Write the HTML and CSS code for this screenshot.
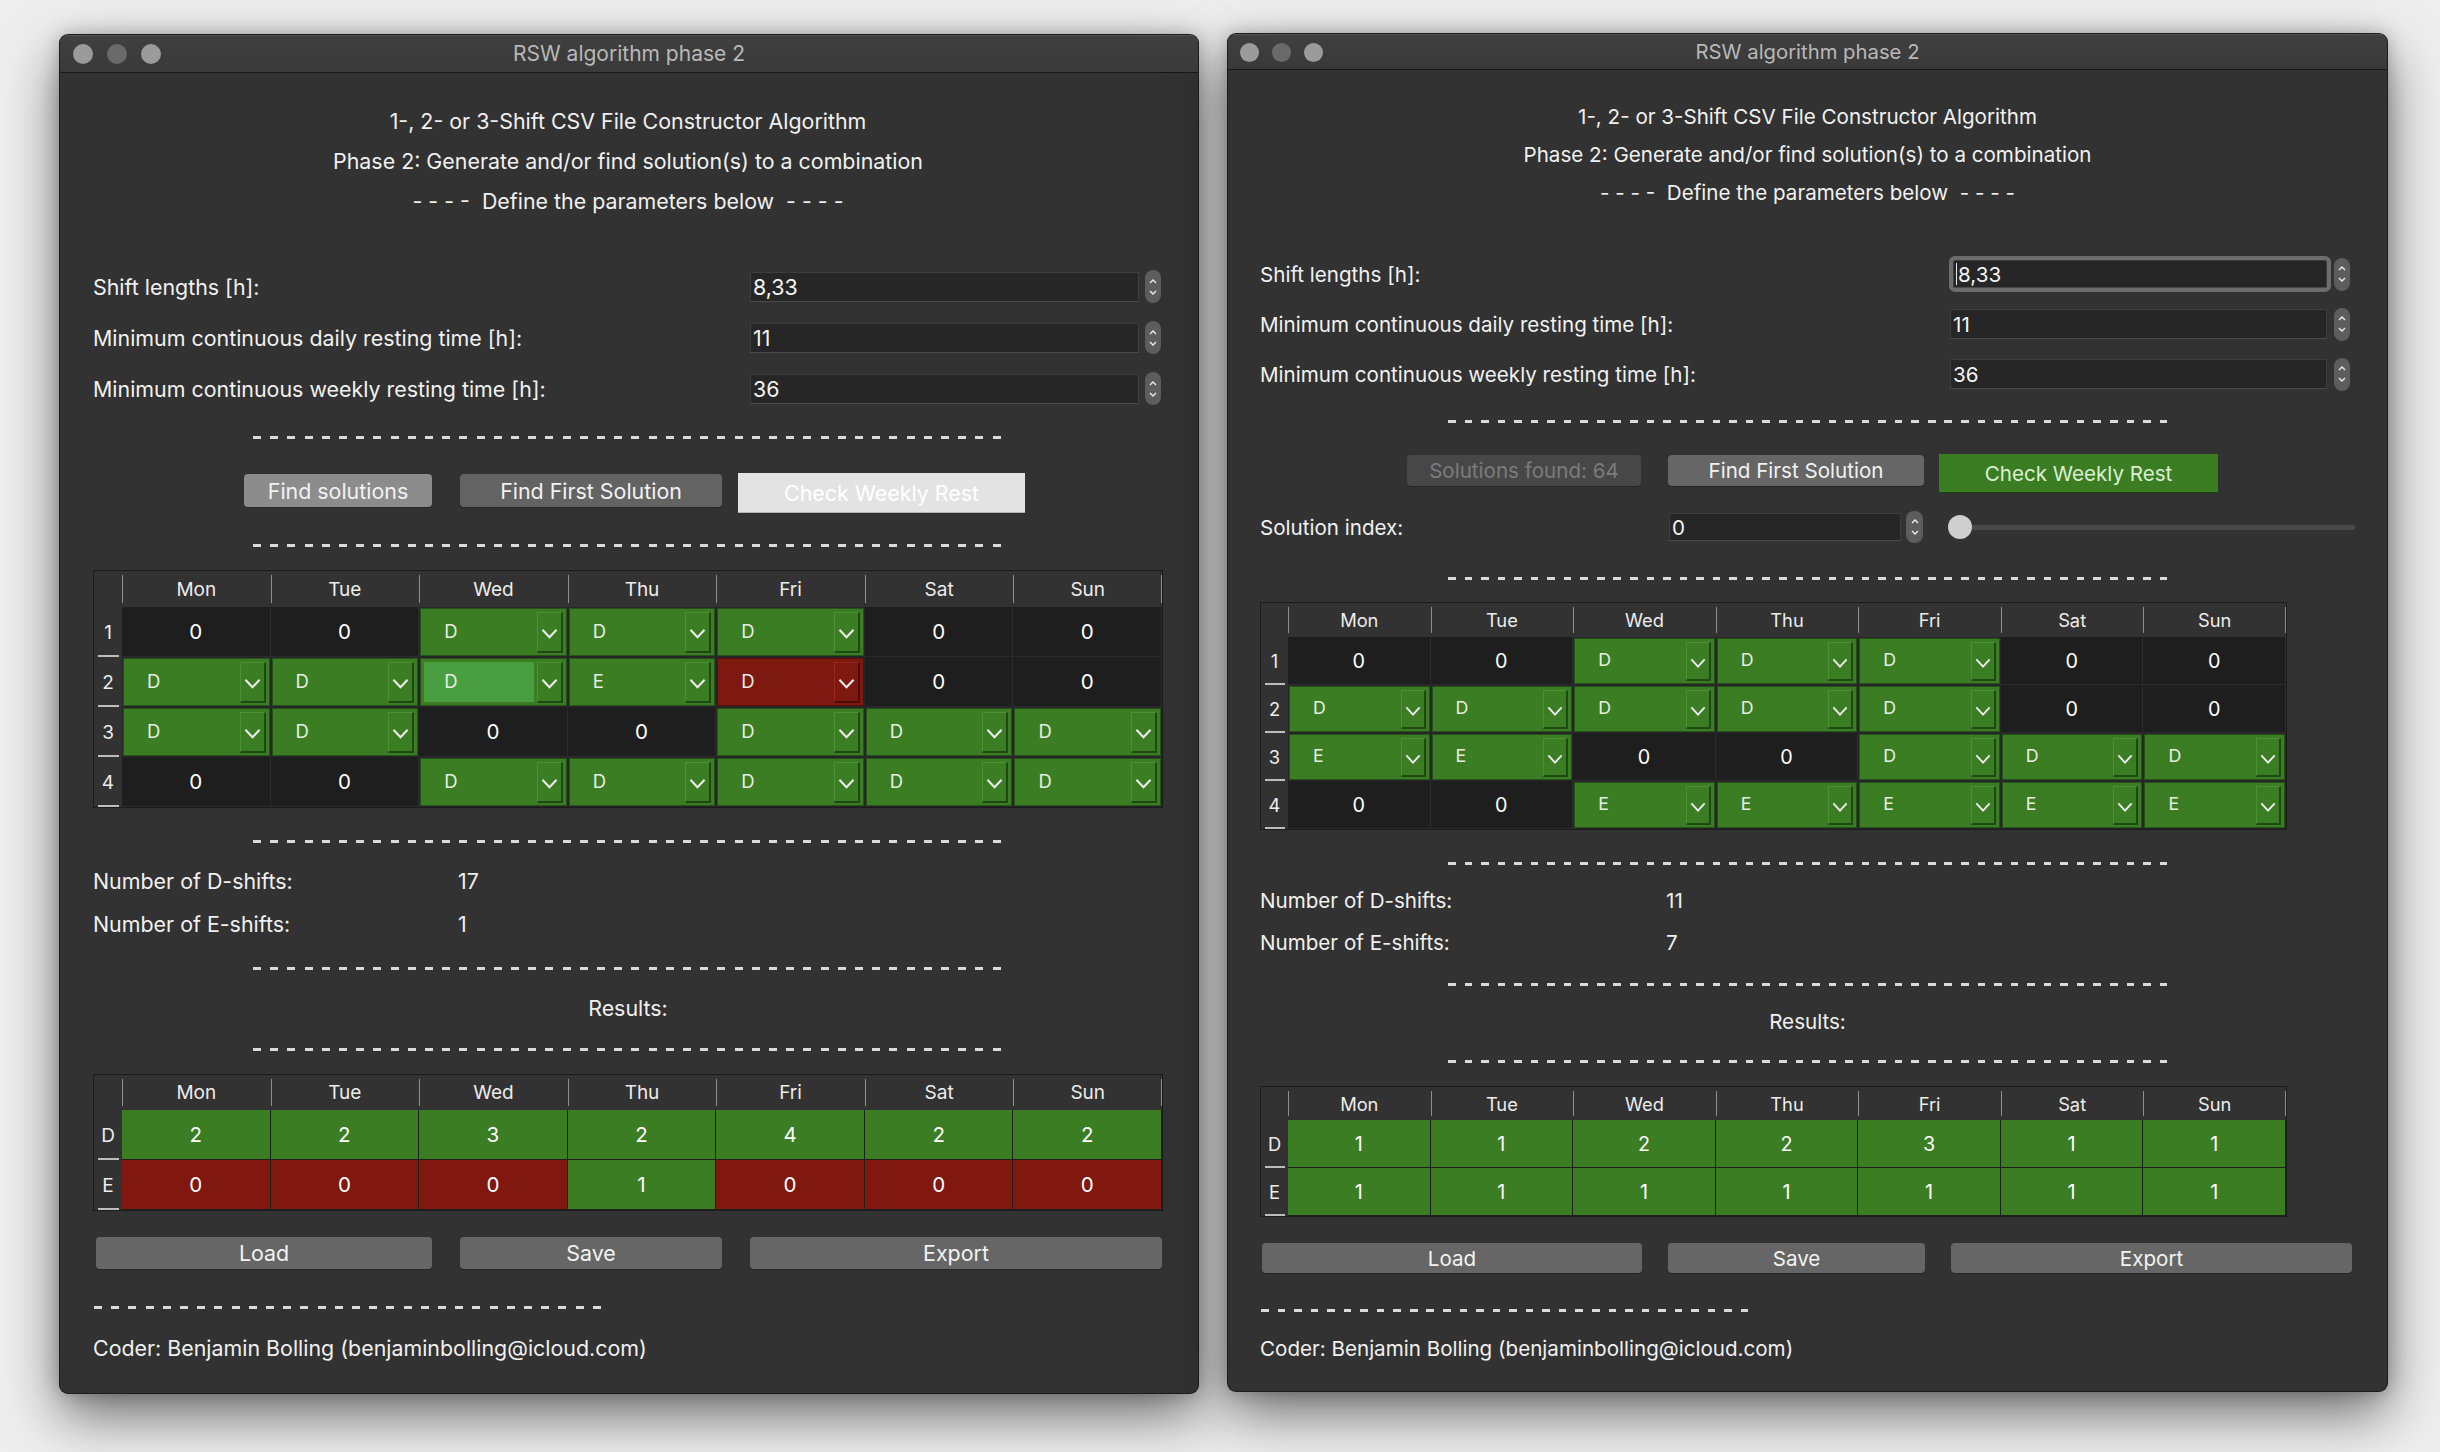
FILE: index.html
```html
<!DOCTYPE html>
<html>
<head>
<meta charset="utf-8">
<title>RSW algorithm phase 2</title>
<link rel="stylesheet" href="styles.css">
</head>
<body>

<div class="win win-l">
  <div class="titlebar">
    <div class="lights"><span class="light"></span><span class="light mid"></span><span class="light"></span></div>
    <span class="ttl">RSW algorithm phase 2</span>
  </div>
  <div class="content">
    <div class="hline">1-, 2- or 3-Shift CSV File Constructor Algorithm</div>
    <div class="hline">Phase 2: Generate and/or find solution(s) to a combination</div>
    <div class="hline pre">- - - -  Define the parameters below  - - - -</div>

    <div class="rows">
      <div class="frow"><span class="lbl">Shift lengths [h]:</span><div class="field">8,33</div><div class="spin"><svg viewBox="0 0 8 5"><polyline points="1,4 4,1 7,4"/></svg><svg viewBox="0 0 8 5"><polyline points="1,1 4,4 7,1"/></svg></div></div>
      <div class="frow"><span class="lbl">Minimum continuous daily resting time [h]:</span><div class="field">11</div><div class="spin"><svg viewBox="0 0 8 5"><polyline points="1,4 4,1 7,4"/></svg><svg viewBox="0 0 8 5"><polyline points="1,1 4,4 7,1"/></svg></div></div>
      <div class="frow"><span class="lbl">Minimum continuous weekly resting time [h]:</span><div class="field">36</div><div class="spin"><svg viewBox="0 0 8 5"><polyline points="1,4 4,1 7,4"/></svg><svg viewBox="0 0 8 5"><polyline points="1,1 4,4 7,1"/></svg></div></div>
    </div>

    <div class="dash d1"></div>

    <div class="btnrow top">
      <div class="btn b-find">Find solutions</div>
      <div class="btn b-first">Find First Solution</div>
      <div class="btn b-check-off">Check Weekly Rest</div>
    </div>

    <div class="dash d2"></div>

    <div class="grid main">
      <div class="th corner"></div><div class="th">Mon</div><div class="th">Tue</div><div class="th">Wed</div><div class="th">Thu</div><div class="th">Fri</div><div class="th">Sat</div><div class="th last">Sun</div>

      <div class="rh">1</div>
      <div class="c0">0</div><div class="c0">0</div>
      <div class="cb"><div class="combo"><span class="val">D</span><span class="arr"><svg viewBox="0 0 18 11"><polyline points="1.5,1.5 9,9.5 16.5,1.5"/></svg></span></div></div>
      <div class="cb"><div class="combo"><span class="val">D</span><span class="arr"><svg viewBox="0 0 18 11"><polyline points="1.5,1.5 9,9.5 16.5,1.5"/></svg></span></div></div>
      <div class="cb"><div class="combo"><span class="val">D</span><span class="arr"><svg viewBox="0 0 18 11"><polyline points="1.5,1.5 9,9.5 16.5,1.5"/></svg></span></div></div>
      <div class="c0">0</div><div class="c0">0</div>

      <div class="rh">2</div>
      <div class="cb"><div class="combo"><span class="val">D</span><span class="arr"><svg viewBox="0 0 18 11"><polyline points="1.5,1.5 9,9.5 16.5,1.5"/></svg></span></div></div>
      <div class="cb"><div class="combo"><span class="val">D</span><span class="arr"><svg viewBox="0 0 18 11"><polyline points="1.5,1.5 9,9.5 16.5,1.5"/></svg></span></div></div>
      <div class="cb"><div class="combo focus"><span class="val">D</span><span class="arr"><svg viewBox="0 0 18 11"><polyline points="1.5,1.5 9,9.5 16.5,1.5"/></svg></span></div></div>
      <div class="cb"><div class="combo"><span class="val">E</span><span class="arr"><svg viewBox="0 0 18 11"><polyline points="1.5,1.5 9,9.5 16.5,1.5"/></svg></span></div></div>
      <div class="cb"><div class="combo red"><span class="val">D</span><span class="arr"><svg viewBox="0 0 18 11"><polyline points="1.5,1.5 9,9.5 16.5,1.5"/></svg></span></div></div>
      <div class="c0">0</div><div class="c0">0</div>

      <div class="rh">3</div>
      <div class="cb"><div class="combo"><span class="val">D</span><span class="arr"><svg viewBox="0 0 18 11"><polyline points="1.5,1.5 9,9.5 16.5,1.5"/></svg></span></div></div>
      <div class="cb"><div class="combo"><span class="val">D</span><span class="arr"><svg viewBox="0 0 18 11"><polyline points="1.5,1.5 9,9.5 16.5,1.5"/></svg></span></div></div>
      <div class="c0">0</div><div class="c0">0</div>
      <div class="cb"><div class="combo"><span class="val">D</span><span class="arr"><svg viewBox="0 0 18 11"><polyline points="1.5,1.5 9,9.5 16.5,1.5"/></svg></span></div></div>
      <div class="cb"><div class="combo"><span class="val">D</span><span class="arr"><svg viewBox="0 0 18 11"><polyline points="1.5,1.5 9,9.5 16.5,1.5"/></svg></span></div></div>
      <div class="cb"><div class="combo"><span class="val">D</span><span class="arr"><svg viewBox="0 0 18 11"><polyline points="1.5,1.5 9,9.5 16.5,1.5"/></svg></span></div></div>

      <div class="rh">4</div>
      <div class="c0">0</div><div class="c0">0</div>
      <div class="cb"><div class="combo"><span class="val">D</span><span class="arr"><svg viewBox="0 0 18 11"><polyline points="1.5,1.5 9,9.5 16.5,1.5"/></svg></span></div></div>
      <div class="cb"><div class="combo"><span class="val">D</span><span class="arr"><svg viewBox="0 0 18 11"><polyline points="1.5,1.5 9,9.5 16.5,1.5"/></svg></span></div></div>
      <div class="cb"><div class="combo"><span class="val">D</span><span class="arr"><svg viewBox="0 0 18 11"><polyline points="1.5,1.5 9,9.5 16.5,1.5"/></svg></span></div></div>
      <div class="cb"><div class="combo"><span class="val">D</span><span class="arr"><svg viewBox="0 0 18 11"><polyline points="1.5,1.5 9,9.5 16.5,1.5"/></svg></span></div></div>
      <div class="cb"><div class="combo"><span class="val">D</span><span class="arr"><svg viewBox="0 0 18 11"><polyline points="1.5,1.5 9,9.5 16.5,1.5"/></svg></span></div></div>
    </div>

    <div class="dash d3"></div>

    <div class="stats">
      <div class="srow"><span class="slbl">Number of D-shifts:</span><span>17</span></div>
      <div class="srow"><span class="slbl">Number of E-shifts:</span><span>1</span></div>
    </div>

    <div class="dash d4"></div>
    <div class="results">Results:</div>
    <div class="dash d5"></div>

    <div class="grid res">
      <div class="th corner"></div><div class="th">Mon</div><div class="th">Tue</div><div class="th">Wed</div><div class="th">Thu</div><div class="th">Fri</div><div class="th">Sat</div><div class="th last">Sun</div>
      <div class="rh">D</div>
      <div class="rc g">2</div><div class="rc g">2</div><div class="rc g">3</div><div class="rc g">2</div><div class="rc g">4</div><div class="rc g">2</div><div class="rc g">2</div>
      <div class="rh">E</div>
      <div class="rc r">0</div><div class="rc r">0</div><div class="rc r">0</div><div class="rc g">1</div><div class="rc r">0</div><div class="rc r">0</div><div class="rc r">0</div>
    </div>

    <div class="btnrow bottom">
      <div class="btn b-load">Load</div>
      <div class="btn b-save">Save</div>
      <div class="btn b-export">Export</div>
    </div>

    <div class="dash d6"></div>
    <div class="coder">Coder: Benjamin Bolling (benjaminbolling@icloud.com)</div>
  </div>
</div>

<div class="win win-r">
  <div class="titlebar">
    <div class="lights"><span class="light"></span><span class="light mid"></span><span class="light"></span></div>
    <span class="ttl">RSW algorithm phase 2</span>
  </div>
  <div class="content">
    <div class="hline">1-, 2- or 3-Shift CSV File Constructor Algorithm</div>
    <div class="hline">Phase 2: Generate and/or find solution(s) to a combination</div>
    <div class="hline pre">- - - -  Define the parameters below  - - - -</div>

    <div class="rows">
      <div class="frow"><span class="lbl">Shift lengths [h]:</span><div class="field focused"><span class="caret"></span>8,33</div><div class="spin"><svg viewBox="0 0 8 5"><polyline points="1,4 4,1 7,4"/></svg><svg viewBox="0 0 8 5"><polyline points="1,1 4,4 7,1"/></svg></div></div>
      <div class="frow"><span class="lbl">Minimum continuous daily resting time [h]:</span><div class="field">11</div><div class="spin"><svg viewBox="0 0 8 5"><polyline points="1,4 4,1 7,4"/></svg><svg viewBox="0 0 8 5"><polyline points="1,1 4,4 7,1"/></svg></div></div>
      <div class="frow"><span class="lbl">Minimum continuous weekly resting time [h]:</span><div class="field">36</div><div class="spin"><svg viewBox="0 0 8 5"><polyline points="1,4 4,1 7,4"/></svg><svg viewBox="0 0 8 5"><polyline points="1,1 4,4 7,1"/></svg></div></div>
    </div>

    <div class="dash d1"></div>

    <div class="btnrow top">
      <div class="btn b-found">Solutions found: 64</div>
      <div class="btn b-first">Find First Solution</div>
      <div class="btn b-check-on">Check Weekly Rest</div>
    </div>

    <div class="irow">
      <span class="ilbl">Solution index:</span>
      <div class="field small">0</div>
      <div class="spin"><svg viewBox="0 0 8 5"><polyline points="1,4 4,1 7,4"/></svg><svg viewBox="0 0 8 5"><polyline points="1,1 4,4 7,1"/></svg></div>
      <div class="slider"><span class="knob"></span><span class="track"></span></div>
    </div>

    <div class="dash d2"></div>

    <div class="grid main">
      <div class="th corner"></div><div class="th">Mon</div><div class="th">Tue</div><div class="th">Wed</div><div class="th">Thu</div><div class="th">Fri</div><div class="th">Sat</div><div class="th last">Sun</div>

      <div class="rh">1</div>
      <div class="c0">0</div><div class="c0">0</div>
      <div class="cb"><div class="combo"><span class="val">D</span><span class="arr"><svg viewBox="0 0 18 11"><polyline points="1.5,1.5 9,9.5 16.5,1.5"/></svg></span></div></div>
      <div class="cb"><div class="combo"><span class="val">D</span><span class="arr"><svg viewBox="0 0 18 11"><polyline points="1.5,1.5 9,9.5 16.5,1.5"/></svg></span></div></div>
      <div class="cb"><div class="combo"><span class="val">D</span><span class="arr"><svg viewBox="0 0 18 11"><polyline points="1.5,1.5 9,9.5 16.5,1.5"/></svg></span></div></div>
      <div class="c0">0</div><div class="c0">0</div>

      <div class="rh">2</div>
      <div class="cb"><div class="combo"><span class="val">D</span><span class="arr"><svg viewBox="0 0 18 11"><polyline points="1.5,1.5 9,9.5 16.5,1.5"/></svg></span></div></div>
      <div class="cb"><div class="combo"><span class="val">D</span><span class="arr"><svg viewBox="0 0 18 11"><polyline points="1.5,1.5 9,9.5 16.5,1.5"/></svg></span></div></div>
      <div class="cb"><div class="combo"><span class="val">D</span><span class="arr"><svg viewBox="0 0 18 11"><polyline points="1.5,1.5 9,9.5 16.5,1.5"/></svg></span></div></div>
      <div class="cb"><div class="combo"><span class="val">D</span><span class="arr"><svg viewBox="0 0 18 11"><polyline points="1.5,1.5 9,9.5 16.5,1.5"/></svg></span></div></div>
      <div class="cb"><div class="combo"><span class="val">D</span><span class="arr"><svg viewBox="0 0 18 11"><polyline points="1.5,1.5 9,9.5 16.5,1.5"/></svg></span></div></div>
      <div class="c0">0</div><div class="c0">0</div>

      <div class="rh">3</div>
      <div class="cb"><div class="combo"><span class="val">E</span><span class="arr"><svg viewBox="0 0 18 11"><polyline points="1.5,1.5 9,9.5 16.5,1.5"/></svg></span></div></div>
      <div class="cb"><div class="combo"><span class="val">E</span><span class="arr"><svg viewBox="0 0 18 11"><polyline points="1.5,1.5 9,9.5 16.5,1.5"/></svg></span></div></div>
      <div class="c0">0</div><div class="c0">0</div>
      <div class="cb"><div class="combo"><span class="val">D</span><span class="arr"><svg viewBox="0 0 18 11"><polyline points="1.5,1.5 9,9.5 16.5,1.5"/></svg></span></div></div>
      <div class="cb"><div class="combo"><span class="val">D</span><span class="arr"><svg viewBox="0 0 18 11"><polyline points="1.5,1.5 9,9.5 16.5,1.5"/></svg></span></div></div>
      <div class="cb"><div class="combo"><span class="val">D</span><span class="arr"><svg viewBox="0 0 18 11"><polyline points="1.5,1.5 9,9.5 16.5,1.5"/></svg></span></div></div>

      <div class="rh">4</div>
      <div class="c0">0</div><div class="c0">0</div>
      <div class="cb"><div class="combo"><span class="val">E</span><span class="arr"><svg viewBox="0 0 18 11"><polyline points="1.5,1.5 9,9.5 16.5,1.5"/></svg></span></div></div>
      <div class="cb"><div class="combo"><span class="val">E</span><span class="arr"><svg viewBox="0 0 18 11"><polyline points="1.5,1.5 9,9.5 16.5,1.5"/></svg></span></div></div>
      <div class="cb"><div class="combo"><span class="val">E</span><span class="arr"><svg viewBox="0 0 18 11"><polyline points="1.5,1.5 9,9.5 16.5,1.5"/></svg></span></div></div>
      <div class="cb"><div class="combo"><span class="val">E</span><span class="arr"><svg viewBox="0 0 18 11"><polyline points="1.5,1.5 9,9.5 16.5,1.5"/></svg></span></div></div>
      <div class="cb"><div class="combo"><span class="val">E</span><span class="arr"><svg viewBox="0 0 18 11"><polyline points="1.5,1.5 9,9.5 16.5,1.5"/></svg></span></div></div>
    </div>

    <div class="dash d3"></div>

    <div class="stats">
      <div class="srow"><span class="slbl">Number of D-shifts:</span><span>11</span></div>
      <div class="srow"><span class="slbl">Number of E-shifts:</span><span>7</span></div>
    </div>

    <div class="dash d4"></div>
    <div class="results">Results:</div>
    <div class="dash d5"></div>

    <div class="grid res">
      <div class="th corner"></div><div class="th">Mon</div><div class="th">Tue</div><div class="th">Wed</div><div class="th">Thu</div><div class="th">Fri</div><div class="th">Sat</div><div class="th last">Sun</div>
      <div class="rh">D</div>
      <div class="rc g">1</div><div class="rc g">1</div><div class="rc g">2</div><div class="rc g">2</div><div class="rc g">3</div><div class="rc g">1</div><div class="rc g">1</div>
      <div class="rh">E</div>
      <div class="rc g">1</div><div class="rc g">1</div><div class="rc g">1</div><div class="rc g">1</div><div class="rc g">1</div><div class="rc g">1</div><div class="rc g">1</div>
    </div>

    <div class="btnrow bottom">
      <div class="btn b-load">Load</div>
      <div class="btn b-save">Save</div>
      <div class="btn b-export">Export</div>
    </div>

    <div class="dash d6"></div>
    <div class="coder">Coder: Benjamin Bolling (benjaminbolling@icloud.com)</div>
  </div>
</div>

</body>
</html>
```

FILE: styles.css
```css
* { box-sizing: border-box; margin: 0; padding: 0; }

html, body { background: #eeeeee; }

body {
  width: 2440px;
  height: 1452px;
  overflow: hidden;
  font-family: Inter, "Liberation Sans", sans-serif;
  color: #f0f0f0;
  display: flex;
  align-items: flex-start;
  gap: 30px;
  padding: 35px 0 0 60px;
}

/* ---------- window chrome ---------- */
.win {
  background: #323232;
  border-radius: 8px;
  box-shadow: 0 0 0 1px #1c1c1c, 0 22px 55px rgba(0, 0, 0, 0.55), 0 0 18px rgba(0, 0, 0, 0.25);
  overflow: hidden;
  display: flex;
  flex-direction: column;
  flex: none;
}
.win-l { width: 1138px; height: 1358px; }
.win-r { width: 1159px; height: 1357px; margin-top: -1px; }

.titlebar {
  height: 38px;
  flex: none;
  background: linear-gradient(#404040, #393939);
  border-bottom: 1px solid #171717;
  box-shadow: inset 0 1px 0 #545454;
  position: relative;
  display: flex;
  align-items: center;
  justify-content: center;
  color: #b8b8b8;
  font-size: 21px;
}
.win-r .titlebar { height: 36px; font-size: 20.3px; }

.lights { position: absolute; left: 13px; top: 9px; display: flex; gap: 14px; }
.win-r .lights { left: 12px; top: 9px; gap: 13px; }
.light { width: 20px; height: 20px; border-radius: 50%; background: #9b9b9b; }
.win-r .light { width: 19px; height: 19px; }
.light.mid { background: #6a6a6a; }

.content { display: flex; flex-direction: column; }
.win-l .content { padding: 28px 35px 0 33px; font-size: 21.4px; }
.win-r .content { padding: 28px 32px 0 32px; font-size: 20.6px; }

/* ---------- header lines ---------- */
.hline { text-align: center; white-space: pre; }
.win-l .hline { height: 40px; line-height: 40px; }
.win-r .hline { height: 38px; line-height: 38px; }

/* ---------- form rows ---------- */
.win-l .rows { margin-top: 40px; }
.win-r .rows { margin-top: 37px; }
.frow { display: flex; align-items: center; }
.win-l .frow { height: 51px; padding-right: 2px; }
.win-r .frow { height: 50px; padding-right: 5px; }
.lbl { flex: 1; }

.field {
  height: 30px;
  background: #262626;
  border: 1px solid #3d3d3d;
  border-bottom-color: #4a4a4a;
  padding-left: 2px;
  display: flex;
  align-items: center;
  color: #f4f4f4;
}
.win-l .field { width: 389px; }
.win-r .field { width: 377px; }
.win-r .field.focused {
  width: 374px;
  height: 28px;
  margin-left: 3px;
  outline: 4px solid #6c6c6c;
  outline-offset: 0;
  border-radius: 2px;
}
.caret { width: 1px; height: 22px; background: #e8e8e8; margin-right: 1px; }

.spin {
  width: 16px;
  height: 33px;
  border-radius: 8px;
  background: #5d5d5d;
  display: flex;
  flex-direction: column;
  align-items: center;
  justify-content: center;
  gap: 6px;
  flex: none;
}
.win-l .spin { margin-left: 6px; }
.win-r .spin { margin-left: 7px; }
.spin svg { width: 8px; height: 5px; fill: none; stroke: #ededed; stroke-width: 1.4; }

/* ---------- dashed separators ---------- */
.dash { height: 3px; align-self: center; flex: none; }
.win-l .dash { width: 751px; background: repeating-linear-gradient(90deg, #dadada 0 8px, transparent 8px 17.2px); }
.win-r .dash { width: 720px; background: repeating-linear-gradient(90deg, #dadada 0 7.6px, transparent 7.6px 16.55px); }
.win-l .d1 { margin-top: 22px; }
.win-l .d2 { margin-top: 32px; }
.win-l .d3 { margin-top: 32px; }
.win-l .d4 { margin-top: 22px; }
.win-l .d5 { margin-top: 20px; }
.win-l .d6 { margin-top: 37px; width: 507px; align-self: flex-start; margin-left: 1px; }
.win-r .d1 { margin-top: 21px; }
.win-r .d2 { margin-top: 33px; }
.win-r .d3 { margin-top: 32px; }
.win-r .d4 { margin-top: 20px; }
.win-r .d5 { margin-top: 18px; }
.win-r .d6 { margin-top: 36px; width: 487px; align-self: flex-start; margin-left: 1px; }

/* ---------- buttons ---------- */
.btnrow { display: flex; align-items: flex-start; }
.btn {
  display: flex;
  align-items: center;
  justify-content: center;
  border-radius: 4px;
  color: #f2f2f2;
  box-shadow: 0 1px 0 #262626;
  flex: none;
}
.win-l .btnrow.top { margin-top: 35px; padding-left: 151px; }
.win-l .btnrow.top .btn { height: 33px; }
.win-l .b-find { width: 188px; background: #8c8c8c; }
.win-l .b-first { width: 262px; margin-left: 28px; background: #636363; }
.win-l .b-check-off {
  width: 287px; height: 39px !important; margin-left: 16px; margin-top: -1px;
  background: #e3e3e3; color: #ffffff; border-radius: 0; box-shadow: 0 1px 0 #b5b5b5;
}

.win-r .btnrow.top { margin-top: 31px; padding-left: 147px; }
.win-r .btnrow.top .btn { height: 31px; margin-top: 1px; }
.win-r .b-found { width: 234px; background: #474747; color: #7b7b7b; }
.win-r .b-first { width: 256px; margin-left: 27px; background: #666666; }
.win-r .btnrow.top .b-check-on {
  width: 279px; height: 38px; margin-top: 0; margin-left: 15px;
  background: #3a7d22; color: #dcefd3; border-radius: 0; box-shadow: 0 1px 0 #1d3f11;
}

.win-l .btnrow.bottom { margin-top: 26px; padding-left: 3px; }
.win-l .btnrow.bottom .btn { height: 32px; background: #666666; }
.win-l .b-load { width: 336px; }
.win-l .b-save { width: 262px; margin-left: 28px; }
.win-l .b-export { width: 412px; margin-left: 28px; }

.win-r .btnrow.bottom { margin-top: 26px; padding-left: 2px; }
.win-r .btnrow.bottom .btn { height: 30px; background: #666666; }
.win-r .b-load { width: 380px; }
.win-r .b-save { width: 257px; margin-left: 26px; }
.win-r .b-export { width: 401px; margin-left: 26px; }

/* ---------- solution index row ---------- */
.irow { display: flex; align-items: center; height: 34px; margin-top: 18px; }
.ilbl { width: 409px; flex: none; }
.win-r .field.small { width: 232px; height: 28px; }
.win-r .irow .spin { margin-left: 5px; width: 17px; height: 32px; }
.slider { flex: 1; display: flex; align-items: center; margin-left: 25px; }
.knob {
  width: 24px; height: 24px; border-radius: 50%; background: #cfcfcf;
  flex: none; position: relative; z-index: 1;
}
.track { flex: 1; height: 5px; border-radius: 3px; background: #4a4a4a; margin-left: -12px; }

/* ---------- tables ---------- */
.grid {
  display: grid;
  border: 1px solid #1b1b1b;
  background: #262626;
  flex: none;
}
.win-l .grid { width: 1070px; grid-template-columns: 28px repeat(7, 1fr); font-size: 19px; }
.win-r .grid { width: 1027px; grid-template-columns: 27px repeat(7, 1fr); font-size: 18.3px; }
.win-l .grid.main { margin-top: 23px; grid-template-rows: 36px repeat(4, 50px); }
.win-r .grid.main { margin-top: 22px; grid-template-rows: 34px repeat(4, 48px); }
.win-l .grid.res { margin-top: 23px; grid-template-rows: 35px repeat(2, 50px); }
.win-r .grid.res { margin-top: 23px; grid-template-rows: 33px repeat(2, 48px); }

.th {
  background: #323232;
  display: flex;
  align-items: center;
  justify-content: center;
  position: relative;
  color: #ececec;
}
.th::before {
  content: "";
  position: absolute;
  left: 0; top: 4px; bottom: 4px;
  width: 1px;
  background: #8e8e8e;
}
.th.corner::before { display: none; }
.th.last::after {
  content: "";
  position: absolute;
  right: 0; top: 4px; bottom: 4px;
  width: 1px;
  background: #8e8e8e;
}

.rh {
  background: #323232;
  display: flex;
  align-items: center;
  justify-content: center;
  position: relative;
  color: #ececec;
}
.rh::after {
  content: "";
  position: absolute;
  left: 4px; right: 3px; bottom: 0;
  height: 2px;
  background: #bdbdbd;
}

.c0 {
  background: #1e1e1e;
  border-right: 1px solid #2b2b2b;
  border-bottom: 1px solid #2b2b2b;
  display: flex;
  align-items: center;
  justify-content: center;
  color: #ffffff;
  font-size: 1.08em;
}

.cb { padding: 1px; background: #262626; }
.combo {
  height: 100%;
  background: #3a7d22;
  border: 1px solid #24521a;
  display: flex;
  align-items: stretch;
  color: #e6eee2;
}
.combo .val {
  flex: 1;
  display: flex;
  align-items: center;
  margin: 3px;
  padding-left: 20px;
  padding-bottom: 3px;
  font-size: 0.97em;
}
.combo.focus .val { background: #4a9e42; }
.arr {
  width: 26px;
  flex: none;
  margin: 3px 3px 2px 0;
  border-left: 1px solid #4c9035;
  border-top: 1px solid #4c9035;
  border-right: 2px solid #1f4913;
  border-bottom: 2px solid #1f4913;
  display: flex;
  align-items: center;
  justify-content: center;
  padding-top: 3px;
}
.arr svg { width: 17px; height: 11px; fill: none; stroke: #ececec; stroke-width: 2.2; }
.win-r .arr { width: 25px; }
.win-r .arr svg { width: 16px; height: 10px; }

.combo.red { background: #7e1911; border-color: #5a0f09; }
.combo.red .arr { border-left-color: #95281f; border-top-color: #95281f; border-right-color: #4e0c07; border-bottom-color: #4e0c07; }

.rc {
  display: flex;
  align-items: center;
  justify-content: center;
  color: #ffffff;
  border-right: 1px solid #1f1f1f;
  border-bottom: 1px solid #1f1f1f;
  font-size: 1.08em;
}
.rc.g { background: #3a7d22; }
.rc.r { background: #801810; }

/* ---------- stats & footer ---------- */
.win-l .stats { margin-top: 16px; }
.win-r .stats { margin-top: 14px; }
.srow { display: flex; align-items: center; }
.win-l .srow { height: 43px; }
.win-r .srow { height: 42px; }
.win-l .slbl { width: 365px; }
.win-r .slbl { width: 406px; }

.results { text-align: center; height: 40px; line-height: 40px; }
.win-l .results { margin-top: 18px; }
.win-r .results { margin-top: 16px; }

.coder { height: 40px; line-height: 40px; }
.win-l .coder { margin-top: 19px; }
.win-r .coder { margin-top: 17px; }
```
